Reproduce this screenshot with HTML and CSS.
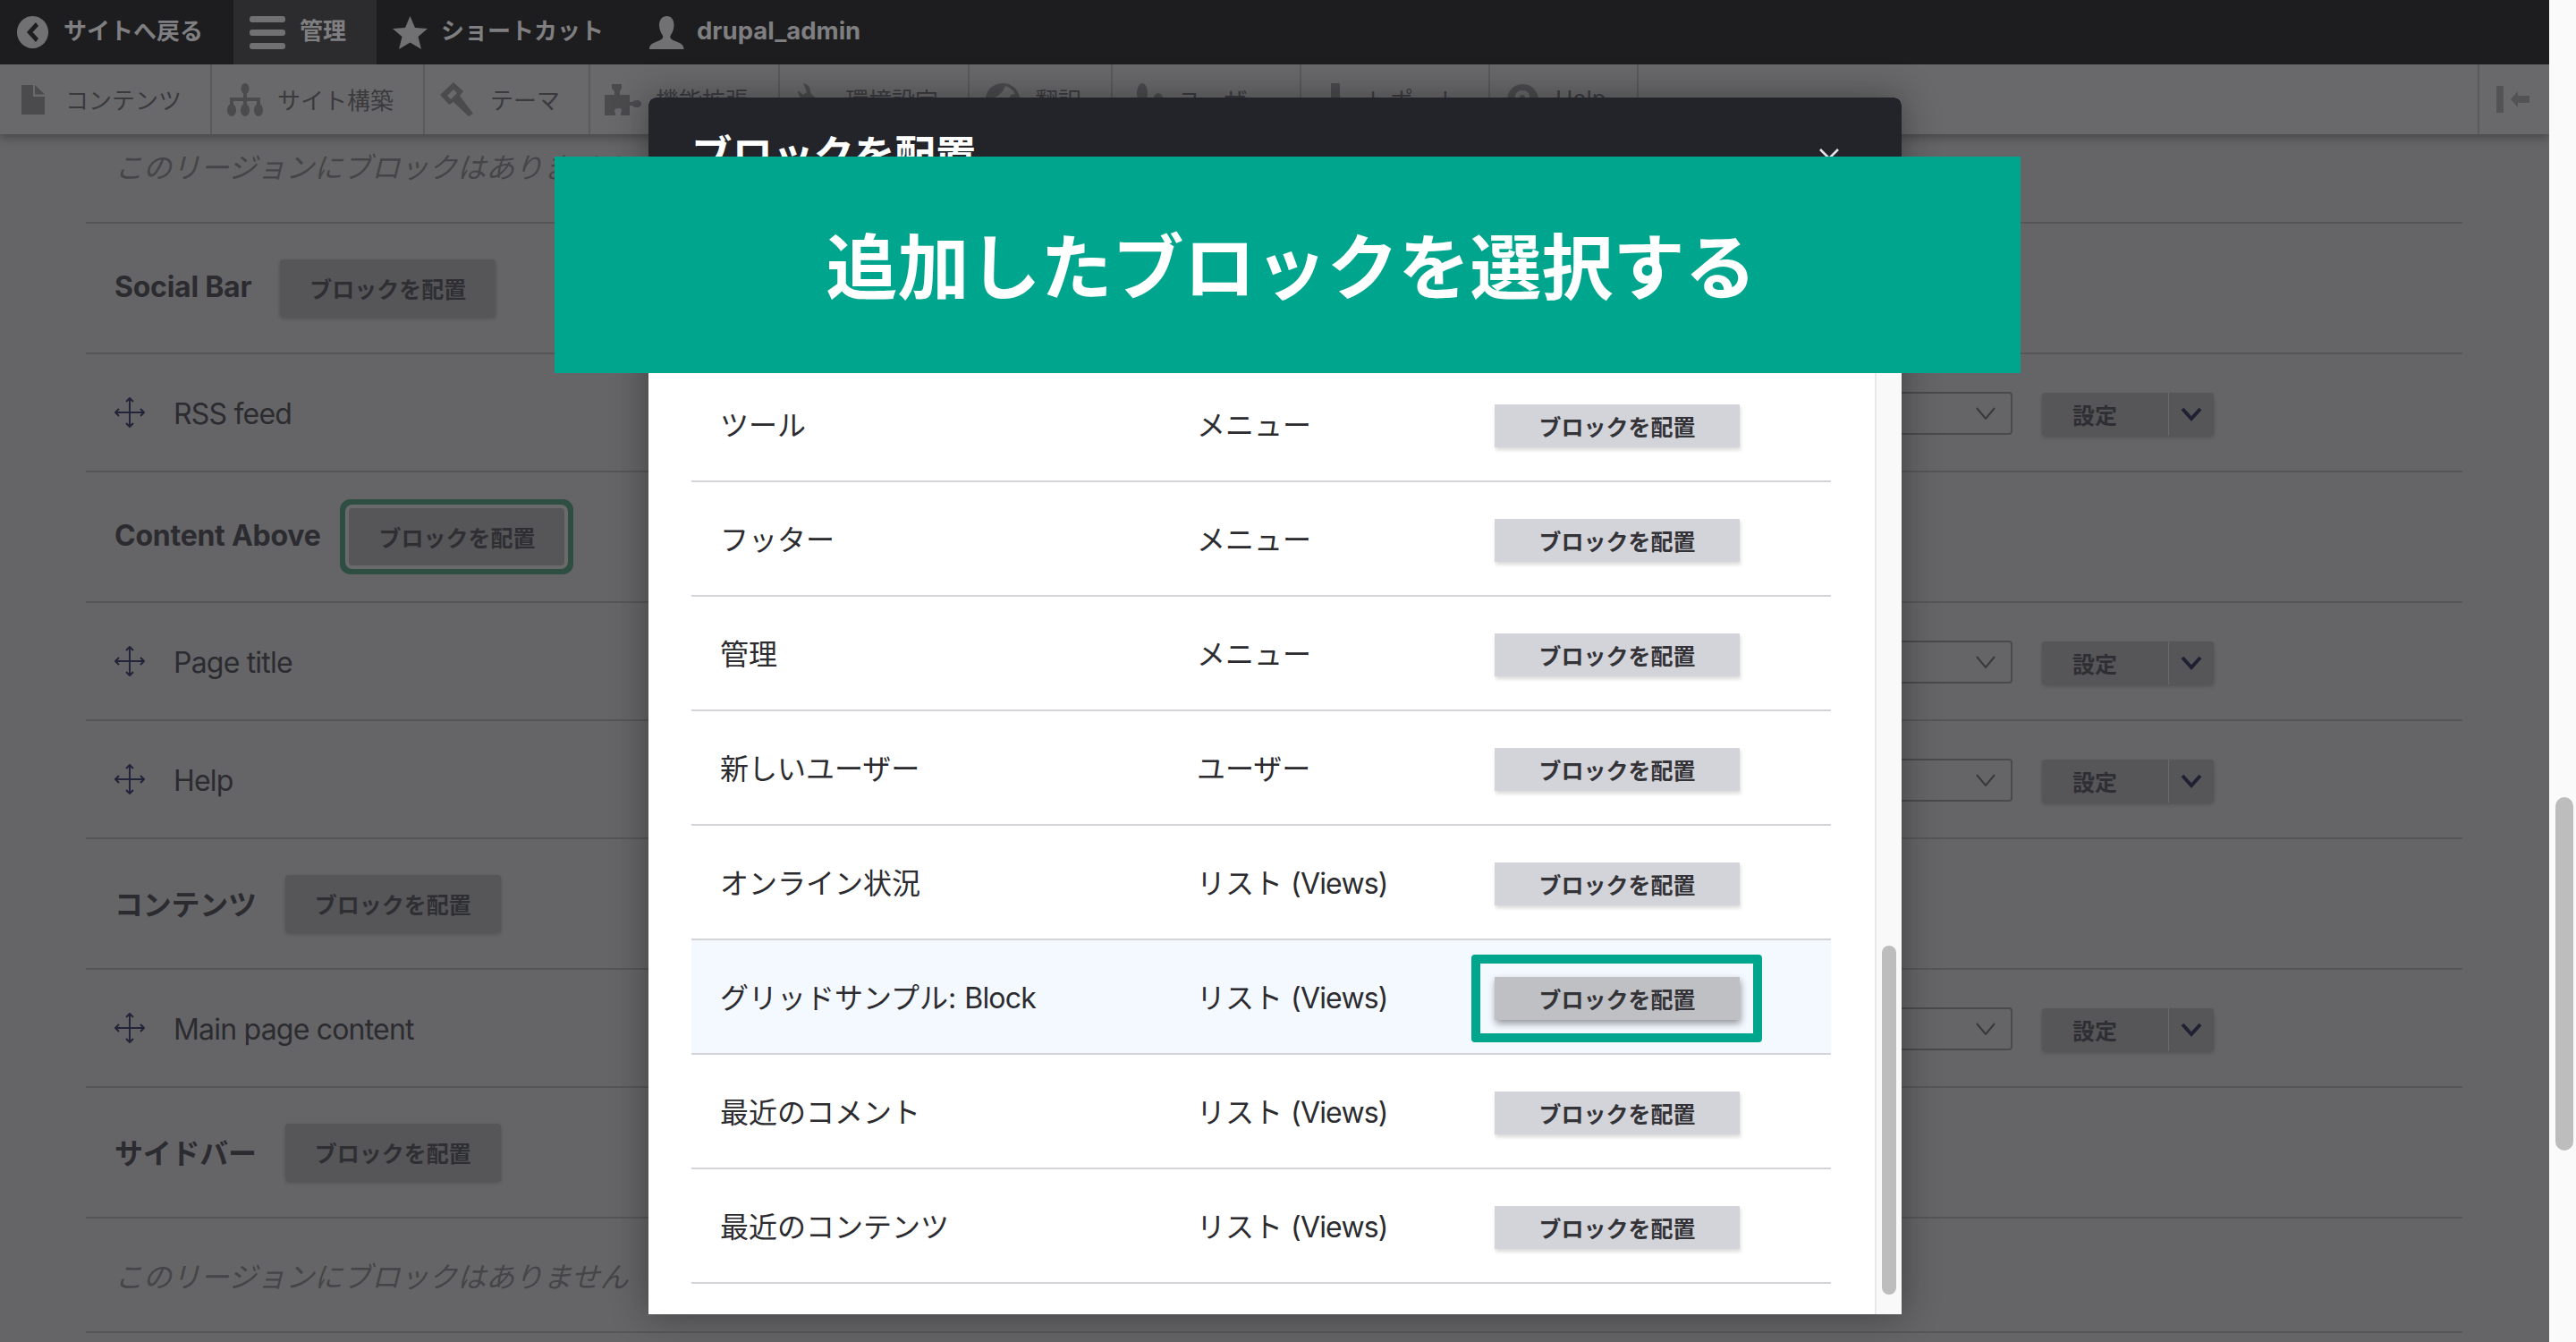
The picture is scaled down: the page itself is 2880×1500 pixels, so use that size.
FILE: index.html
```html
<!DOCTYPE html>
<html lang="ja">
<head>
<meta charset="utf-8">
<title>ブロックレイアウト</title>
<link rel="stylesheet" href="styles.css">
</head>
<body>
<div class="window">
  <div class="viewport">
    <header class="toolbar">
      <nav class="topbar">
        <a class="top-item back">
          <svg class="ti" width="35" height="36" viewBox="0 0 35 36"><path fill-rule="evenodd" d="M17.5 0a17.5 18 0 1 0 .01 0ZM21 7l-10 11 10 11 3-4-6.500-7L24 11Z"/></svg>
          <span>サイトへ戻る</span>
        </a>
        <a class="top-item admin">
          <svg class="ti" width="40" height="37" viewBox="0 0 40 37"><rect width="40" height="7" rx="3"/><rect y="15" width="40" height="7" rx="3"/><rect y="30" width="40" height="7" rx="3"/></svg>
          <span>管理</span>
        </a>
        <a class="top-item star">
          <svg class="ti" width="39" height="37" viewBox="0 0 39 37"><path d="M19.500 0l5.500 13 14 1-10.500 9 3.500 14-12.500-7.500L7 37l3.500-14L0 14l14-1Z"/></svg>
          <span>ショートカット</span>
        </a>
        <a class="top-item user">
          <svg class="ti" width="39" height="37" viewBox="0 0 39 37"><path d="M19.500 0c5 0 8 4 8 10 0 5-2 9-4 12-1 3 2 5 8 7 5 2 7 4 7 8H0c0-4 2-6 7-8 6-2 9-4 8-7-2-3-4-7-4-12C11 4 14.500 0 19.500 0Z"/></svg>
          <span class="user-name">drupal_admin</span>
        </a>
      </nav>
      <nav class="tray">
        <a class="tray-item w237"><span class="tray-icon"><svg width="26" height="33" viewBox="0 0 26 33"><path d="M0 0h13v13h13v20H0ZM15 0l11 10.500H15Z"/></svg></span><span>コンテンツ</span></a>
        <a class="tray-item w238"><span class="tray-icon"><svg width="40" height="37" viewBox="0 0 40 37"><ellipse cx="20" cy="6" rx="4.500" ry="6"/><ellipse cx="5" cy="30" rx="5" ry="7"/><ellipse cx="20" cy="30" rx="5" ry="7"/><ellipse cx="35" cy="30" rx="5" ry="7"/><path d="M18 10h4v6h15v10h-4v-6H22v6h-4v-6H7v6H3V16h15Z"/></svg></span><span>サイト構築</span></a>
        <a class="tray-item w185"><span class="tray-icon"><svg width="39" height="38" viewBox="0 0 39 38"><path fill-rule="evenodd" d="M15 0L0 14l10 11 5-3 17 16 5-3-15-20 4-5ZM15 8l-7 7 4 4 7-7Z"/></svg></span><span>テーマ</span></a>
        <a class="tray-item w212"><span class="tray-icon"><svg width="41" height="35" viewBox="0 0 41 35"><path d="M8 0h11v5l-2 3v4h11v8h3c2-3 10-3 10 2s-8 5-10 2h-3v11H18v-3c2-3 1-5-3-5s-5 3-3 5v3H0V12h11V8L8 5Z"/></svg></span><span>機能拡張</span></a>
        <a class="tray-item w212"><span class="tray-icon"><svg width="34" height="36" viewBox="0 0 34 36"><path d="M6 0c5 1 8 4 8 9 0 2 1 3 3 5l14 15c3 4-1 8-5 5L11 19C5 19 0 15 0 8l6 5 4-3Z"/></svg></span><span>環境設定</span></a>
        <a class="tray-item w160"><span class="tray-icon"><svg width="38" height="36" viewBox="0 0 38 36"><path fill-rule="evenodd" d="M19 0a19 18 0 1 0 .01 0ZM22 3l-3 6-5 5-7 3 5 3 4-1 3 5 6-2 3-9 5-1C30 7 26 4 22 3Z"/></svg></span><span>翻訳</span></a>
        <a class="tray-item w211"><span class="tray-icon shift-a"><svg width="30" height="36" viewBox="0 0 30 36"><ellipse cx="6" cy="11" rx="6" ry="11"/><ellipse cx="24" cy="20" rx="6" ry="9"/><rect x="2" y="20" width="10" height="14"/></svg></span><span>ユーザー</span></a>
        <a class="tray-item w211"><span class="tray-icon shift-b"><svg width="26" height="36" viewBox="0 0 26 36"><rect width="10" height="36" rx="1"/><rect x="15" y="16" width="10" height="20" rx="1"/></svg></span><span>レポート</span></a>
        <a class="tray-item w166"><span class="tray-icon"><svg width="35" height="35" viewBox="0 0 35 35"><path fill-rule="evenodd" d="M17.500 0a17.500 17.500 0 1 0 .01 0ZM17 7c-5 0-8 3-8 8h5c0-2 1-3 3-3s3 1 3 3-5 3-5 8h5c0-3 5-4 5-9 0-4-3-7-8-7Z"/></svg></span><span>Help</span></a>
        <a class="tray-toggle"><svg width="37" height="30" viewBox="0 0 37 30"><rect width="8" height="30"/><path d="M16 15l8-9v5h13v8H24v5Z"/></svg></a>
      </nav>
    </header>

    <main class="layout">
      <div class="row row-empty"><em>このリージョンにブロックはありません</em></div>

      <div class="row row-region"><strong>Social Bar</strong><a class="btn">ブロックを配置</a></div>
      <div class="row row-block">
        <svg class="drag" width="34" height="34" viewBox="0 0 34 34"><use href="#drag-icon"/></svg><span class="lt">RSS feed</span>
        <div class="ops"><span class="select"><svg width="22" height="14" viewBox="0 0 22 14"><path d="M1 1l10 12L21 1" fill="none" stroke="#39393c" stroke-width="2"/></svg></span><span class="split"><b>設定</b><i><svg width="24" height="16" viewBox="0 0 24 16"><path d="M2 2l10 11L22 2" fill="none" stroke="#1f2133" stroke-width="4"/></svg></i></span></div>
      </div>

      <div class="row row-region"><strong>Content Above</strong><a class="btn btn-focus">ブロックを配置</a></div>
      <div class="row row-block">
        <svg class="drag" width="34" height="34" viewBox="0 0 34 34"><use href="#drag-icon"/></svg><span class="lt">Page title</span>
        <div class="ops"><span class="select"><svg width="22" height="14" viewBox="0 0 22 14"><path d="M1 1l10 12L21 1" fill="none" stroke="#39393c" stroke-width="2"/></svg></span><span class="split"><b>設定</b><i><svg width="24" height="16" viewBox="0 0 24 16"><path d="M2 2l10 11L22 2" fill="none" stroke="#1f2133" stroke-width="4"/></svg></i></span></div>
      </div>
      <div class="row row-block">
        <svg class="drag" width="34" height="34" viewBox="0 0 34 34"><use href="#drag-icon"/></svg><span class="lt">Help</span>
        <div class="ops"><span class="select"><svg width="22" height="14" viewBox="0 0 22 14"><path d="M1 1l10 12L21 1" fill="none" stroke="#39393c" stroke-width="2"/></svg></span><span class="split"><b>設定</b><i><svg width="24" height="16" viewBox="0 0 24 16"><path d="M2 2l10 11L22 2" fill="none" stroke="#1f2133" stroke-width="4"/></svg></i></span></div>
      </div>

      <div class="row row-region"><strong>コンテンツ</strong><a class="btn">ブロックを配置</a></div>
      <div class="row row-block">
        <svg class="drag" width="34" height="34" viewBox="0 0 34 34"><use href="#drag-icon"/></svg><span class="lt">Main page content</span>
        <div class="ops"><span class="select"><svg width="22" height="14" viewBox="0 0 22 14"><path d="M1 1l10 12L21 1" fill="none" stroke="#39393c" stroke-width="2"/></svg></span><span class="split"><b>設定</b><i><svg width="24" height="16" viewBox="0 0 24 16"><path d="M2 2l10 11L22 2" fill="none" stroke="#1f2133" stroke-width="4"/></svg></i></span></div>
      </div>

      <div class="row row-region"><strong>サイドバー</strong><a class="btn">ブロックを配置</a></div>
      <div class="row row-empty"><em>このリージョンにブロックはありません</em></div>
    </main>

    <section class="modal">
      <div class="modal-head">
        <h1>ブロックを配置</h1>
        <svg class="close" width="22" height="22" viewBox="0 0 22 22"><path d="M1 1l20 20M21 1L1 21" stroke="#e4e4e6" stroke-width="2.500"/></svg>
      </div>
      <div class="modal-main">
        <div class="modal-body">
          <div class="m-row"><span class="c1">ツール</span><span class="c2">メニュー</span><a class="m-btn">ブロックを配置</a></div>
          <div class="m-row"><span class="c1">フッター</span><span class="c2">メニュー</span><a class="m-btn">ブロックを配置</a></div>
          <div class="m-row"><span class="c1">管理</span><span class="c2">メニュー</span><a class="m-btn">ブロックを配置</a></div>
          <div class="m-row"><span class="c1">新しいユーザー</span><span class="c2">ユーザー</span><a class="m-btn">ブロックを配置</a></div>
          <div class="m-row"><span class="c1">オンライン状況</span><span class="c2">リスト <span class="lt">(Views)</span></span><a class="m-btn">ブロックを配置</a></div>
          <div class="m-row m-row-hover"><span class="c1">グリッドサンプル: <span class="lt">Block</span></span><span class="c2">リスト <span class="lt">(Views)</span></span><a class="m-btn m-btn-hover">ブロックを配置<span class="callout"></span></a></div>
          <div class="m-row"><span class="c1">最近のコメント</span><span class="c2">リスト <span class="lt">(Views)</span></span><a class="m-btn">ブロックを配置</a></div>
          <div class="m-row"><span class="c1">最近のコンテンツ</span><span class="c2">リスト <span class="lt">(Views)</span></span><a class="m-btn">ブロックを配置</a></div>
        </div>
        <div class="modal-scroll"><span class="thumb"></span></div>
      </div>
    </section>

    <div class="banner">追加したブロックを選択する</div>
  </div>
  <aside class="page-scroll"><span class="page-thumb"></span></aside>
</div>
<svg class="defs" width="0" height="0"><defs><g id="drag-icon" fill="none" stroke="#22243a" stroke-width="2"><path d="M17 1v32M1 17h32"/><path d="M13 5l4-4 4 4M13 29l4 4 4-4M5 13l-4 4 4 4M29 13l4 4-4 4"/></g></defs></svg>
</body>
</html>
```

FILE: styles.css
```css
* { box-sizing: border-box; }
html, body { margin: 0; height: 100%; }
body {
  font-family: Inter, "Noto Sans CJK JP", sans-serif;
  font-size: 32px;
  color: #2b2b30;
  background: #fafafa;
  overflow: hidden;
}
.defs { position: absolute; }
.lt { letter-spacing: -.8px; }
.window { display: flex; width: 2880px; height: 1500px; overflow: hidden; }
.viewport { position: relative; flex: 0 0 2850px; height: 1500px; background: #656567; overflow: hidden; }

/* toolbar */
.toolbar { position: relative; z-index: 2; box-shadow: 0 4px 10px rgba(0,0,0,.3); }
.topbar { display: flex; height: 72px; background: #1d1d1f; color: #7f7f81; font-size: 26px; font-weight: 700; }
.top-item { display: flex; align-items: center; height: 72px; }
.top-item span { padding-bottom: 7px; }
.top-item .user-name { font-size: 27.5px; padding-bottom: 5px; }
.ti { fill: #717173; flex: none; }
.back { width: 261px; padding-left: 19px; gap: 17px; }
.admin { width: 160px; padding-left: 18px; gap: 16px; background: #2c2c2e; }
.star { width: 305px; padding-left: 18px; gap: 15px; }
.user { gap: 14px; }
.tray { display: flex; height: 78px; background: #69696b; color: #3a3a3d; font-size: 26px; }
.tray-item { display: flex; align-items: center; padding-bottom: 2px; border-right: 2px solid #5a5a5c; height: 78px; }
.tray-icon { flex: 0 0 73px; display: flex; justify-content: center; fill: #4b4b4e; margin-top: 2px; }
.shift-a { padding-left: 10px; }
.shift-b { padding-left: 18px; }
.w237 { width: 237px; }
.w238 { width: 238px; }
.w185 { width: 185px; }
.w212 { width: 212px; }
.w160 { width: 160px; }
.w211 { width: 211px; }
.w166 { width: 166px; }
.tray-toggle { margin-left: auto; width: 80px; height: 78px; border-left: 2px solid #5a5a5c; display: flex; align-items: center; padding-left: 19px; fill: #535355; }

/* page behind the dialog */
.layout { position: relative; z-index: 1; margin: -28px 97px 0 96px; }
.row { display: flex; align-items: center; border-bottom: 2px solid #565658; padding-left: 32px; }
.row-empty { height: 128px; }
.row-empty em { color: #454548; }
.row-region { height: 146px; gap: 32px; }
.row-region strong { font-weight: 700; letter-spacing: -.25px; padding-bottom: 3px; }
.row-block { height: 132px; }
.row-block .lt { padding-top: 2px; }
.drag { flex: none; margin-right: 32px; }
.btn {
  display: flex; align-items: center; justify-content: center;
  width: 241px; height: 64px; border-radius: 4px;
  background: #565659; color: #2f2f33; font-size: 25px; font-weight: 700;
  box-shadow: 0 2px 4px rgba(0,0,0,.2);
}
.btn-focus { box-shadow: 0 0 0 4px #6a6a6c, 0 0 0 10px #2d4e40; }
.ops { display: flex; align-items: center; margin: 3px 278px 0 auto; }
.select {
  display: flex; align-items: center; justify-content: flex-end;
  width: 300px; height: 48px; margin-bottom: 2px; border: 2px solid #4a4a4d; border-radius: 4px; padding-right: 17px;
}
.split {
  display: flex; width: 192px; height: 48px; margin-left: 33px; border-radius: 4px;
  background: #565659; box-shadow: 0 2px 4px rgba(0,0,0,.2); font-size: 25px;
}
.split b { flex: 0 0 141px; display: flex; align-items: center; padding-left: 34px; color: #2f2f33; font-weight: 700; }
.split i { flex: 1; display: flex; align-items: center; justify-content: center; border-left: 1px solid #6a6a6c; }

/* dialog */
.modal {
  position: absolute; z-index: 3; left: 725px; top: 109px; width: 1401px; height: 1360px;
  display: flex; flex-direction: column; background: #fff;
  border-radius: 8px 8px 0 0;
  box-shadow: 0 0 40px rgba(20,20,25,.45);
}
.modal-head {
  flex: 0 0 130px; display: flex; align-items: flex-start; justify-content: space-between;
  background: #232429; border-radius: 8px 8px 0 0; padding: 36px 70px 0 48px;
}
.modal-head h1 { margin: 0; font-size: 45.500px; line-height: 58px; font-weight: 700; color: #fff; }
.close { margin: 21px 0 0; }
.modal-main { flex: 1; display: flex; min-height: 0; }
.modal-body { flex: 1; display: flex; flex-direction: column; justify-content: flex-end; padding: 0 49px 34px 48px; }
.m-row { position: relative; display: flex; align-items: center; height: 128px; flex: none; border-bottom: 2px solid #d3d4d9; padding: 0 0 2px 32px; }
.m-row-hover { background: #f4f8ff; }
.c1 { flex: 0 0 533px; }
.c2 { flex: 0 0 333px; }
.m-btn {
  position: relative; display: flex; align-items: center; justify-content: center;
  width: 274px; height: 48px; margin-top: 5px;
  background: #d3d4d9; color: #333338; font-size: 25px; font-weight: 700;
  box-shadow: 1px 3px 4px rgba(0,0,0,.15);
}
.m-btn-hover { background: #bfc0c4; box-shadow: 1px 4px 8px rgba(0,0,0,.4); }
.callout {
  position: absolute; left: -26px; right: -25px; top: -25px; bottom: -25px;
  border: 10px solid #00a58e; border-radius: 4px;
}
.modal-scroll { flex: 0 0 30px; background: #f9f9f9; border-left: 2px solid #e8e8e8; padding: 818px 0 22px 6px; }
.thumb { display: block; width: 16px; height: 100%; background: #bdbdbd; border-radius: 8px; }

/* annotation banner */
.banner {
  position: absolute; z-index: 4; left: 620px; top: 175px; width: 1639px; height: 242px;
  display: flex; align-items: center; justify-content: center;
  background: #00a58e; color: #fff; font-size: 80px; font-weight: 700; padding: 0 0 6px 8px;
}

/* page scrollbar */
.page-scroll { flex: 0 0 30px; padding: 891px 3px 214px 7px; background: #fafafa; }
.page-thumb { display: block; width: 20px; height: 100%; background: #bdbdbd; border-radius: 10px; }
```
